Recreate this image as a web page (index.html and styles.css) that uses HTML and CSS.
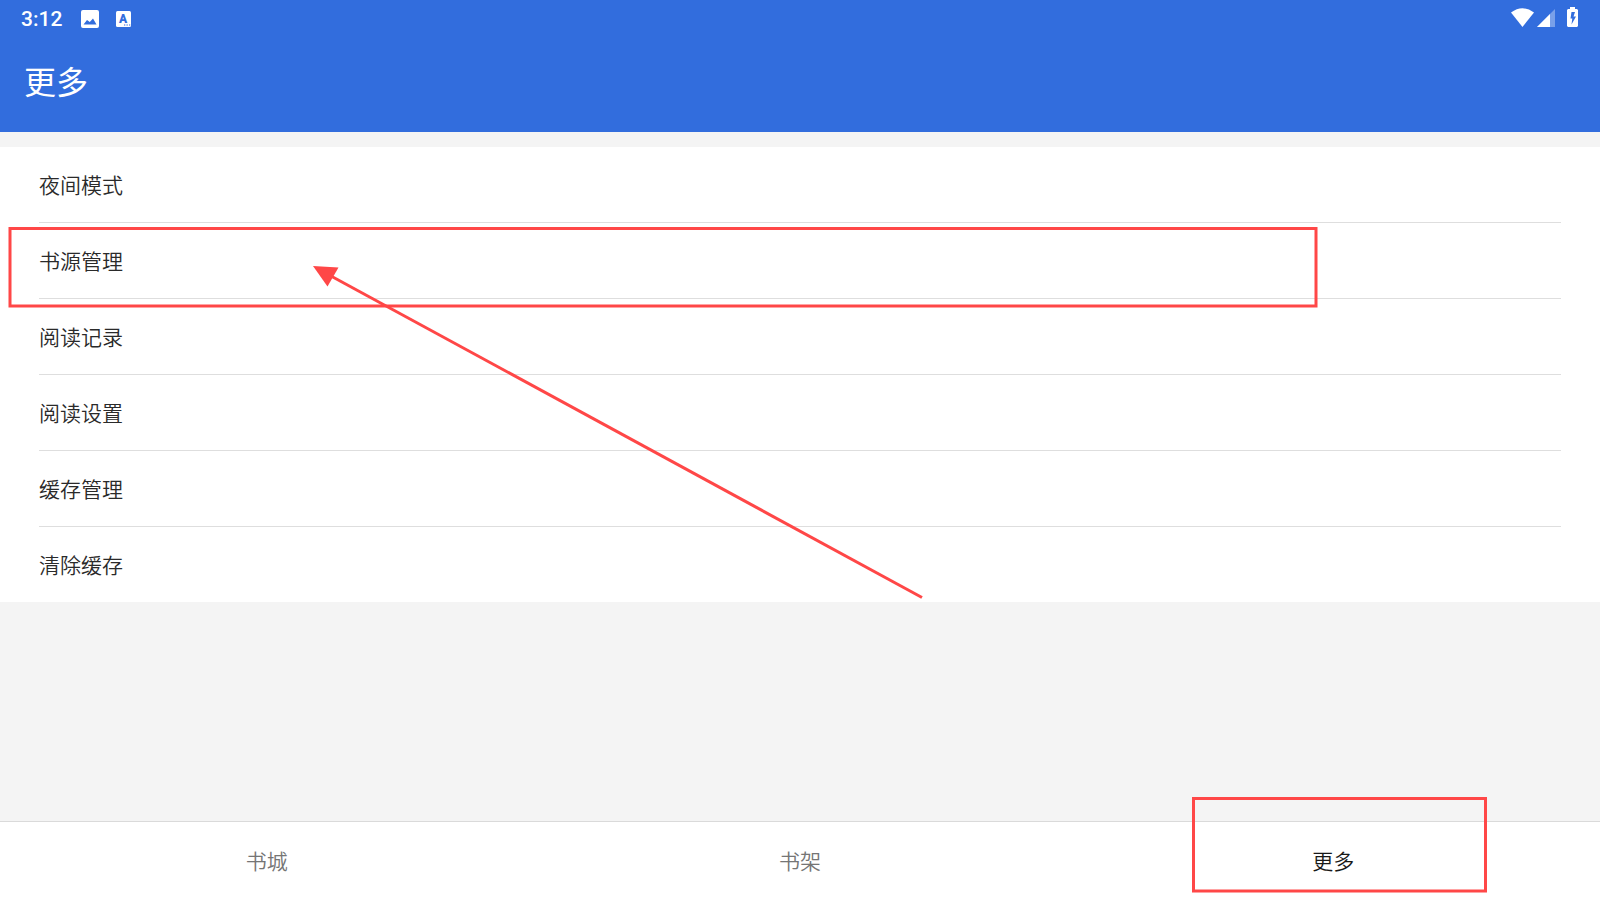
FILE: index.html
```html
<!DOCTYPE html>
<html lang="zh-CN">
<head>
<meta charset="utf-8">
<meta name="viewport" content="width=device-width, initial-scale=1">
<title>更多</title>
<link rel="stylesheet" href="styles.css">
</head>
<body>
<div class="app">
  <header class="top">
    <div class="status">
      <time class="clock">3:12</time>
      <svg class="picture-icon" width="18" height="18" viewBox="0 0 18 18" aria-hidden="true"><path fill="#fff" fill-rule="evenodd" d="M2 0h14a2 2 0 0 1 2 2v14a2 2 0 0 1-2 2H2a2 2 0 0 1-2-2V2a2 2 0 0 1 2-2zM2.500 14.500h13L12 8.500 8.800 12 6 10z"/></svg>
      <svg class="letter-icon" width="15" height="16" viewBox="0 0 15 16" aria-hidden="true"><rect width="15" height="16" rx="1.500" fill="#fff"/><text class="letter" x="7" y="12" text-anchor="middle">A</text><path d="M8 14h1.300M10.500 14h1.300M13 14h1.300" stroke="#326ddd" stroke-width="1.200"/></svg>
      <span class="spacer"></span>
      <div class="indicators">
        <svg class="wifi-icon" width="23" height="19" viewBox="0 0 23 19" aria-hidden="true"><path fill="#fff" d="M0 4.500Q11.500-4 23 4.500L11.500 19z"/></svg>
        <svg class="signal-icon" width="18" height="18" viewBox="0 0 18 18" aria-hidden="true"><path fill="#fff" fill-opacity=".35" d="M18 0v18H0z"/><path fill="#fff" d="M13 5v13H0z"/></svg>
        <svg class="battery-icon" width="11" height="20" viewBox="0 0 11 20" aria-hidden="true"><path fill="#fff" fill-rule="evenodd" d="M3 0h5v2h2l1 1v16l-1 1H1l-1-1V3l1-1h2zM4.500 5L3.500 11.500H5.300L4.500 17.500L9 9.500H6.500L8 5z"/></svg>
      </div>
    </div>
    <h1 class="title">更多</h1>
  </header>
  <main class="content">
    <ul class="menu">
      <li class="item"><button class="entry" type="button">夜间模式</button></li>
      <li class="item"><button class="entry" type="button">书源管理</button></li>
      <li class="item"><button class="entry" type="button">阅读记录</button></li>
      <li class="item"><button class="entry" type="button">阅读设置</button></li>
      <li class="item"><button class="entry" type="button">缓存管理</button></li>
      <li class="item"><button class="entry" type="button">清除缓存</button></li>
    </ul>
  </main>
  <nav class="tabs">
    <a class="tab" href="#store">书城</a>
    <a class="tab" href="#shelf">书架</a>
    <a class="tab current" href="#more" aria-current="page">更多</a>
  </nav>
  <svg class="marks" viewBox="0 0 1600 900" preserveAspectRatio="none" aria-hidden="true">
    <g fill="none" stroke="#ff4747" stroke-width="3">
      <rect x="10" y="228.500" width="1306" height="77.500"/>
      <rect x="1193.500" y="798.500" width="292" height="92.500"/>
      <path d="M330 275.500L922 597.500"/>
    </g>
    <path fill="#ff4747" d="M313 266l25.500 1.500-11 19z"/>
  </svg>
</div>
</body>
</html>
```
FILE: styles.css
```css
* {
  box-sizing: border-box;
}

body {
  margin: 0;
  font-family: Roboto, "Noto Sans CJK SC", sans-serif;
  font-weight: 350;
  color: #2a2a2a;
  background: #f4f4f4;
}

.app {
  position: relative;
  display: flex;
  flex-direction: column;
  min-height: 100vh;
}

.top {
  background: #326ddd;
  color: #fff;
}

.status {
  display: flex;
  align-items: center;
  height: 37px;
  padding: 0 22px 0 21px;
}

.clock {
  font-size: 21px;
  font-weight: 500;
  line-height: 36px;
  margin-right: 19px;
}

.letter-icon {
  margin-left: 17px;
}

.letter {
  fill: #326ddd;
  font-size: 12px;
  font-weight: 900;
}

.spacer {
  flex: 1;
}

.indicators {
  display: flex;
  align-items: flex-end;
  padding-bottom: 4px;
}

.signal-icon {
  margin: 0 12px 0 3px;
}

.title {
  margin: 0;
  padding: 22px 24px 25px;
  font-size: 32px;
  font-weight: 400;
  line-height: 48px;
}

.content {
  flex: 1;
  padding-top: 15px;
}

.menu {
  margin: 0;
  padding: 0 39px;
  list-style: none;
  background: #fff;
}

.item + .item {
  border-top: 1px solid #dedede;
}

.entry {
  display: block;
  width: 100%;
  height: 75px;
  padding: 0 0 2px;
  border: 0;
  background: none;
  color: inherit;
  font: inherit;
  font-size: 21px;
  text-align: left;
}

.tabs {
  display: grid;
  grid-template-columns: repeat(3, 1fr);
  border-top: 1px solid #dadada;
  background: #fff;
}

.tab {
  padding: 25px 0 23px;
  color: #757575;
  font-size: 21px;
  line-height: 30px;
  text-align: center;
  text-decoration: none;
}

.current {
  color: #181818;
}

.marks {
  position: absolute;
  inset: 0;
  width: 100%;
  height: 100%;
  pointer-events: none;
}
```
